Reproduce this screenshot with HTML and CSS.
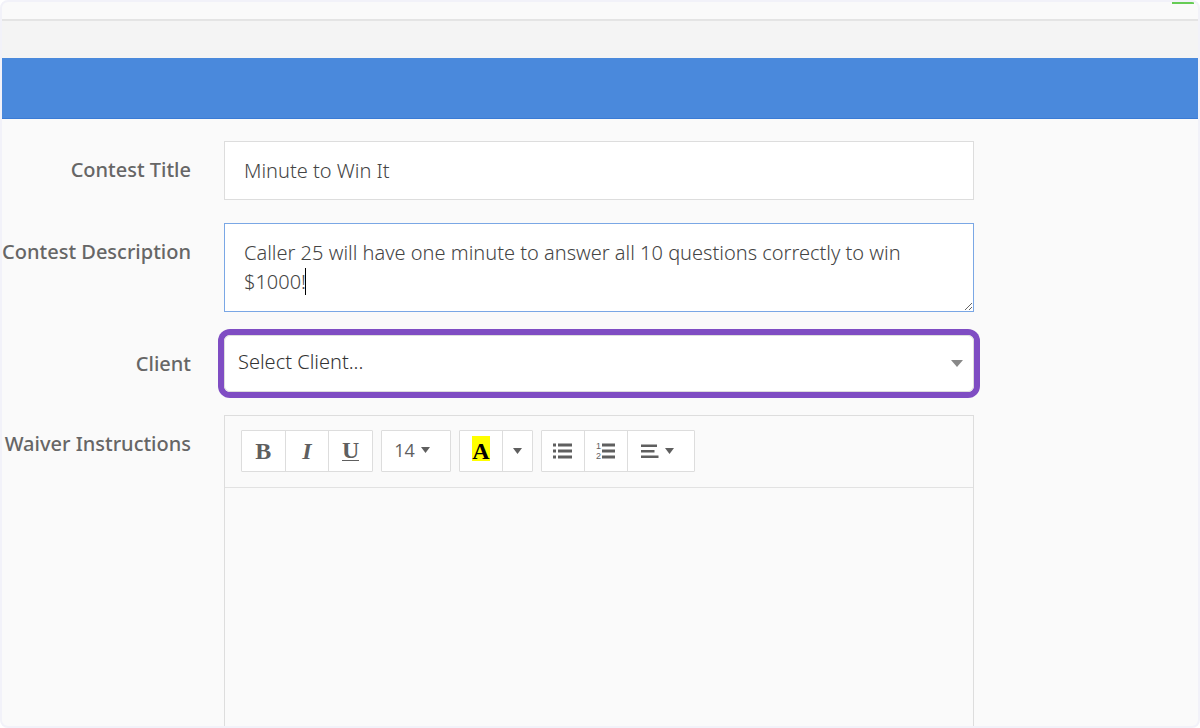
FILE: index.html
```html
<!DOCTYPE html>
<html lang="en">
<head>
    <meta charset="UTF-8">
    <meta name="viewport" content="width=device-width, initial-scale=1.0">
    <title>Create Contest</title>
    <link rel="stylesheet" href="styles.css">
</head>
<body>
    <div class="window">
        <div class="topbar"><span class="status"></span></div>
        <div class="subbar"></div>
        <div class="banner"></div>
        <form class="contest-form">
            <label for="title">Contest Title</label>
            <input type="text" id="title" class="field" value="Minute to Win It">

            <label for="description">Contest Description</label>
            <div class="text-wrap">
                <textarea id="description" class="field active">Caller 25 will have one minute to answer all 10 questions correctly to win $1000!</textarea>
                <span class="caret"></span>
            </div>

            <label for="client">Client</label>
            <div class="select-wrap">
                <select id="client">
                    <option>Select Client...</option>
                </select>
                <svg class="arrow" width="12" height="7" viewBox="0 0 12 7"><path d="M0 0h12L6 7z" fill="#888"/></svg>
            </div>

            <label for="waiver">Waiver Instructions</label>
            <div class="editor">
                <div class="toolbar">
                    <div class="group styles">
                        <button type="button" class="bold" aria-label="Bold">B</button>
                        <button type="button" class="italic" aria-label="Italic">I</button>
                        <button type="button" class="underline" aria-label="Underline"><span>U</span></button>
                    </div>
                    <div class="group size">
                        <button type="button">14 <svg width="9" height="6" viewBox="0 0 9 6"><path d="M0 0h9L4.500 6z"/></svg></button>
                    </div>
                    <div class="group color">
                        <button type="button" class="highlight" aria-label="Highlight"><span class="mark">A</span></button>
                        <button type="button" class="more" aria-label="More colors"><svg width="9" height="6" viewBox="0 0 9 6"><path d="M0 0h9L4.500 6z"/></svg></button>
                    </div>
                    <div class="group para">
                        <button type="button" aria-label="Bulleted list">
                            <svg width="20" height="16" viewBox="0 0 20 16"><path d="M0 0.5h3v3h-3zM0 6.5h3v3h-3zM0 12.5h3v3h-3zM5 0.5h14v3h-14zM5 6.5h14v3h-14zM5 12.5h14v3h-14z"/></svg>
                        </button>
                        <button type="button" aria-label="Numbered list">
                            <svg width="20" height="18" viewBox="0 0 20 18"><text x="0" y="7">1</text><text x="0" y="17">2</text><path d="M6 1.5h13v3h-13zM6 7.5h13v3h-13zM6 13.5h13v3h-13z"/></svg>
                        </button>
                        <button type="button" class="align" aria-label="Paragraph">
                            <svg width="18" height="14" viewBox="0 0 18 14"><path d="M0 0.5h16v2.5h-16zM0 6h13.500v2.500h-13.500zM0 11.500h17.500v2.500h-17.500z"/></svg>
                            <svg width="9" height="6" viewBox="0 0 9 6"><path d="M0 0h9L4.500 6z"/></svg>
                        </button>
                    </div>
                </div>
                <textarea id="waiver" class="editor-body"></textarea>
            </div>
        </form>
    </div>
</body>
</html>
```
FILE: styles.css
```css
* {
    box-sizing: border-box;
}
body {
    margin: 0;
    background-color: #fff;
    color: #666;
    font-family: "Noto Sans", "Open Sans", sans-serif;
    font-size: 20px;
}
.window {
    height: 100vh;
    overflow: hidden;
    border: 2px solid #f2f2f9;
    border-radius: 8px;
    background-color: #fafafa;
}
.topbar {
    display: flex;
    justify-content: flex-end;
    height: 19px;
    padding-right: 4px;
    border-bottom: 2px solid #e4e4e4;
}
.status {
    width: 22px;
    height: 2px;
    background-color: #6c5;
}
.subbar {
    height: 37px;
    background-color: #f4f4f4;
}
.banner {
    height: 61px;
    background-color: #4a89dc;
    border-bottom: 1px solid #3a7bd5;
}
.contest-form {
    display: grid;
    grid-template-columns: 189px 1fr;
    column-gap: 33px;
    row-gap: 23px;
    align-items: start;
    padding: 22px 224px 0 0;
}
label {
    display: flex;
    justify-content: flex-end;
    height: 57px;
    line-height: 58px;
    font-weight: 500;
    white-space: nowrap;
}
.field {
    display: block;
    width: 100%;
    height: 59px;
    padding: 0 19px;
    border: 1px solid #ddd;
    border-radius: 0;
    background-color: #fff;
    color: #444;
    font-family: inherit;
    font-size: 20px;
    font-weight: 350;
    outline: none;
}
textarea.field {
    height: 89px;
    padding: 14px 19px;
    line-height: 29px;
    resize: vertical;
}
.field:focus,
.field.active {
    border-color: #7aa7e5;
}
.text-wrap {
    position: relative;
}
/* Text cursor at the end of the description */
.caret {
    position: absolute;
    top: 45px;
    left: 81px;
    width: 1px;
    height: 27px;
    background-color: #000;
}
.select-wrap {
    position: relative;
    border-radius: 6px;
    box-shadow: 0 0 0 6px #7f4dc3;
}
select {
    display: block;
    appearance: none;
    width: 100%;
    height: 57px;
    padding: 0 13px 4px;
    border: 1px solid #ddd;
    border-radius: 6px;
    background-color: #fff;
    color: #333;
    font-family: inherit;
    font-size: 20px;
    font-weight: 350;
}
.arrow {
    position: absolute;
    top: 25px;
    right: 11px;
    pointer-events: none;
}
.editor {
    border: 1px solid #ddd;
}
.toolbar {
    display: flex;
    gap: 8px;
    padding: 14px 16px 15px;
    border-bottom: 1px solid #e2e2e2;
}
.group {
    display: flex;
    height: 42px;
    border: 1px solid #ddd;
    border-radius: 1px;
    background-color: #fff;
}
.styles {
    width: 132px;
}
.size {
    width: 70px;
}
.color {
    width: 74px;
}
.para {
    width: 154px;
}
button {
    display: flex;
    flex: 1;
    align-items: center;
    justify-content: center;
    gap: 6px;
    padding: 0;
    border: 0;
    background: none;
    color: #5f5f5f;
    font-family: "Liberation Serif", serif;
    font-size: 24px;
    font-weight: bold;
    line-height: 24px;
}
button + button {
    border-left: 1px solid #ddd;
}
button svg {
    fill: #5f5f5f;
}
button text {
    font-family: "Liberation Sans", sans-serif;
    font-size: 9px;
    font-weight: normal;
}
.italic {
    font-style: italic;
}
.underline span {
    height: 20px;
    border-bottom: 1px solid #5f5f5f;
    line-height: 18px;
}
.size button {
    padding: 0 8px 2px 0;
    font-family: "Open Sans", sans-serif;
    font-size: 18px;
    font-weight: normal;
}
.highlight {
    padding-bottom: 5px;
}
.mark {
    padding-top: 6px;
    background-color: #ff0;
    color: #000;
    line-height: 19px;
}
.more {
    flex: 0 0 30px;
}
.align {
    flex: 0 0 67px;
    padding-right: 8px;
}
.editor-body {
    display: block;
    width: 100%;
    height: 320px;
    padding: 16px;
    border: 0;
    background: none;
    font: inherit;
    resize: none;
}
```
